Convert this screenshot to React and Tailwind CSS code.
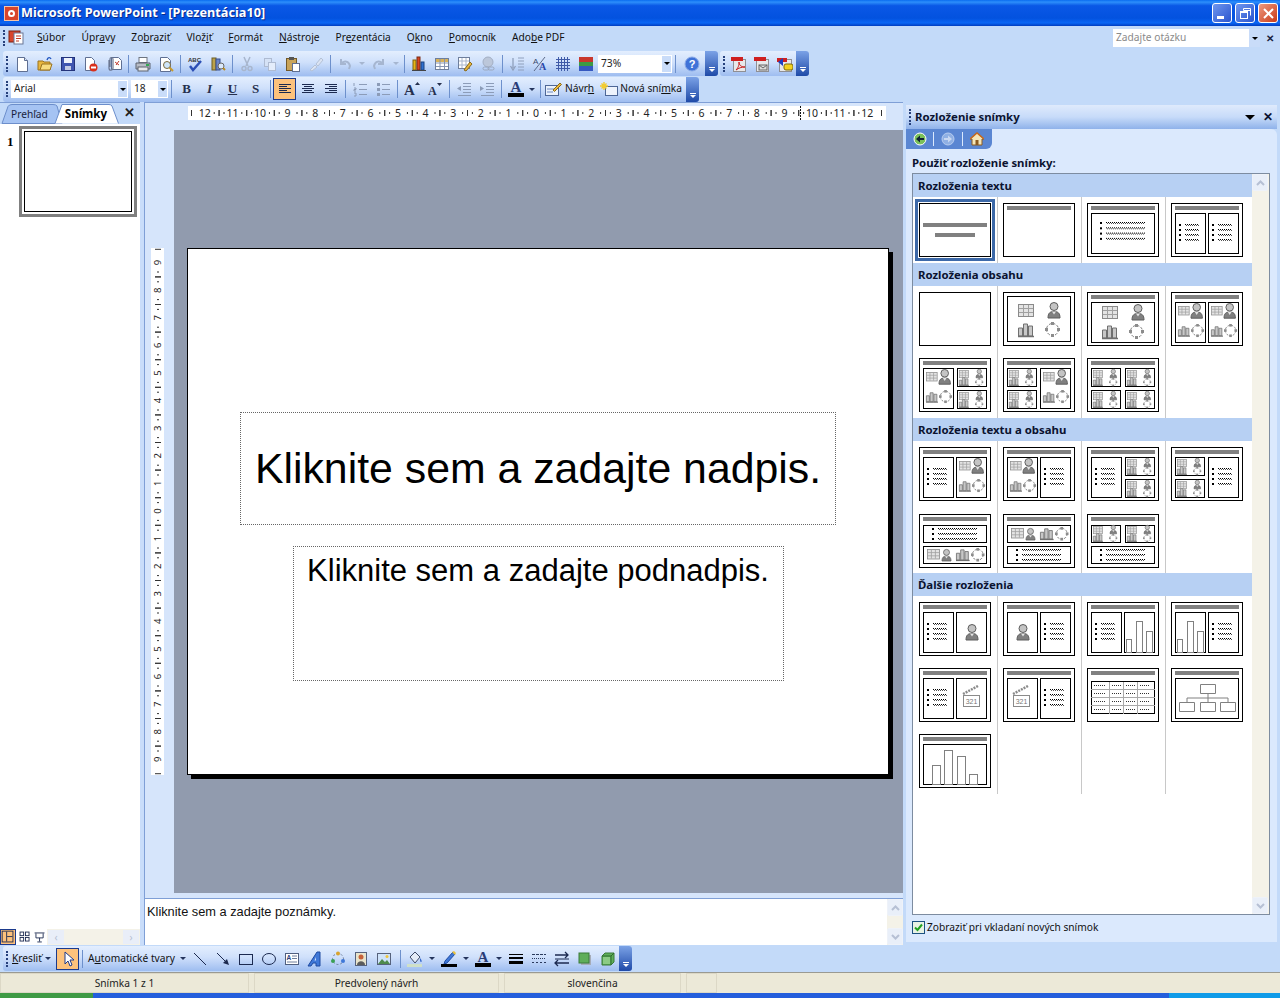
// PowerPoint 2003 window with the slide layout task pane
const uiFont = { fontFamily: '"Noto Sans", sans-serif' }

// ---------- toolbar icons ----------
const Svg = ({ children, w = 16, h = 16 }) => (
  <svg width={w} height={h} viewBox={`0 0 ${w} ${h}`} className="block">{children}</svg>
)
const Page = ({ x = 3, y = 1, w = 10, h = 14, s = '#5f6f92', f = '#fff' }) => (
  <path d={`M${x + .5} ${y + .5}h${w - 3}l3 3v${h - 3}h-${w}z`} fill={f} stroke={s} />
)
const ICONS = {
  newDoc: <Svg><Page /><path d="M10.5 1.5v3h3" fill="#dbe6f7" stroke="#5f6f92" /></Svg>,
  open: <Svg><path d="M1 5h5l1 1h6v8H1z" fill="#e8b63e" stroke="#9a7320" /><path d="M3 14l2-6h10l-2 6z" fill="#f8dc80" stroke="#9a7320" /><path d="M10 4c1-3 3-3 4-1" fill="none" stroke="#2458c0" strokeWidth="1.4" /></Svg>,
  save: <Svg><rect x="1.5" y="1.5" width="13" height="13" fill="#3f55b0" stroke="#24337a" /><rect x="4" y="2" width="8" height="5" fill="#eef2fb" /><rect x="5" y="10" width="6" height="4" fill="#c3cbe4" /></Svg>,
  perm: <Svg><Page x={2} w={9} h={13} /><circle cx="10.5" cy="11.5" r="4" fill="#d9301c" /><rect x="8" y="10.5" width="5" height="2" fill="#fff" /></Svg>,
  mail: <Svg><Page x={5} w={10} h={12} /><path d="M9 6l4 3M13 5l-3 4" stroke="#c0392b" /><path d="M3 4v8c0 3 4 3 4 0V3c0-2-3-2-3 0v8" fill="none" stroke="#6b7690" strokeWidth="1.2" /></Svg>,
  print: <Svg><rect x="4" y="1.5" width="8" height="5" fill="#fff" stroke="#6e7580" /><path d="M1 7h14v6H1z" fill="#b9bdc6" stroke="#5d636e" /><rect x="3" y="11" width="10" height="4" fill="#e8e9ec" stroke="#5d636e" /><rect x="11" y="8" width="3" height="2" fill="#35a852" /></Svg>,
  preview: <Svg><Page x={2} w={10} h={14} /><circle cx="9" cy="9" r="3.5" fill="#cfe6fa" stroke="#7c6a3c" /><path d="M11.5 11.5l3.5 3.5" stroke="#c79a2c" strokeWidth="2" /></Svg>,
  spell: <Svg><text x="1" y="6" fontSize="6" fontWeight="700" fill="#333" fontFamily="Liberation Sans">ABC</text><path d="M3 10l3 4 8-9" fill="none" stroke="#2c4fb5" strokeWidth="2.4" /></Svg>,
  research: <Svg><rect x="2" y="2" width="4" height="12" fill="#bca24a" stroke="#6d5d22" /><rect x="6" y="3" width="4" height="11" fill="#6e86c6" stroke="#39508f" /><circle cx="11" cy="10" r="3" fill="#dbe9fb" stroke="#666" /><path d="M13 12l2 2" stroke="#b98b20" strokeWidth="2" /></Svg>,
  cut: <Svg><path d="M5 1l4 9M11 1l-4 9" stroke="#a8b6cd" strokeWidth="1.5" /><circle cx="5" cy="12.5" r="2" fill="none" stroke="#a8b6cd" strokeWidth="1.4" /><circle cx="11" cy="12.5" r="2" fill="none" stroke="#a8b6cd" strokeWidth="1.4" /></Svg>,
  copy: <Svg><rect x="2.5" y="2.5" width="7" height="8" fill="#d5e2f6" stroke="#aebbd2" /><rect x="6.5" y="6.5" width="7" height="8" fill="#e4edfb" stroke="#aebbd2" /></Svg>,
  paste: <Svg><rect x="1.5" y="2.5" width="10" height="12" fill="#c9a45a" stroke="#72592a" /><rect x="4" y="1" width="5" height="3" fill="#555" /><rect x="7.5" y="7.5" width="7" height="8" fill="#fff" stroke="#5f6f92" /></Svg>,
  painter: <Svg><path d="M2 14l5-5 2 2-5 4zM8 8l5-6 2 2-5 6z" fill="#dbe4f3" stroke="#b4c1d6" /></Svg>,
  undo: <Svg><path d="M4 3v5h5M4 8c3-4 8-3 9 2l-1 3" fill="none" stroke="#a6b6d0" strokeWidth="2" /></Svg>,
  redo: <Svg><path d="M12 3v5H7M12 8c-3-4-8-3-9 2l1 3" fill="none" stroke="#a6b6d0" strokeWidth="2" /></Svg>,
  chart: <Svg><rect x="2" y="4" width="3" height="10" fill="#e7b416" stroke="#7d6410" /><rect x="6" y="1" width="3" height="13" fill="#d9441f" stroke="#7a2a10" /><rect x="10" y="6" width="3" height="8" fill="#2e6fd0" stroke="#1c437e" /><path d="M1 14.5h14" stroke="#444" /></Svg>,
  table: <Svg><rect x="1.5" y="2.5" width="13" height="11" fill="#fff" stroke="#6f7f9c" /><rect x="2" y="3" width="12" height="3" fill="#d8b25a" /><path d="M6 3v10M10.500 3v10M2 7h12M2 10.500h12" stroke="#8795b0" /></Svg>,
  tables: <Svg><rect x="1.500" y="1.500" width="11" height="11" fill="#fff" stroke="#6f7f9c" /><path d="M5 2v10M9 2v10M2 5h10M2 9h10" stroke="#a9b6cc" /><path d="M7 14l6-8 2 2-6 7z" fill="#e8b63e" stroke="#8a6a1a" /></Svg>,
  link: <Svg><circle cx="8" cy="6" r="5" fill="#bcc7da" stroke="#a3afc4" /><rect x="3" y="11" width="6" height="3" rx="1.500" fill="none" stroke="#9aa7bd" /><rect x="8" y="11" width="6" height="3" rx="1.500" fill="none" stroke="#9aa7bd" /></Svg>,
  expand: <Svg><path d="M9 2h6M9 5h6M9 8h6M9 11h6M9 14h6" stroke="#90a0bc" /><path d="M4 2v10M1.500 10l2.500 4 2.500-4" fill="none" stroke="#90a0bc" strokeWidth="1.300" /></Svg>,
  showFmt: <Svg><text x="1" y="8" fontSize="8" fill="#3a4a6c" fontFamily="Liberation Sans">A</text><path d="M13 1L2 15" stroke="#5c6a88" /><text x="7" y="14" fontSize="10" fontWeight="700" fill="#2a47a8" fontFamily="Liberation Serif">A</text></Svg>,
  grid: <Svg><path d="M1 3.500h14M1 6.500h14M1 9.500h14M1 12.500h14M3.500 1v14M6.500 1v14M9.500 1v14M12.500 1v14" stroke="#3f5aa8" /></Svg>,
  color: <Svg><rect x="1" y="1" width="14" height="5" fill="#c8372c" /><rect x="1" y="6" width="14" height="4" fill="#3d9a45" /><rect x="1" y="10" width="14" height="5" fill="#3558c0" /></Svg>,
  help: <Svg><circle cx="8" cy="8" r="7" fill="#3f72d8" stroke="#8aa9e6" /><text x="8" y="12" textAnchor="middle" fontSize="11" fontWeight="700" fill="#fff" fontFamily="Liberation Sans">?</text></Svg>,
  pdf: <Svg><rect x="2.500" y="3.500" width="12" height="12" fill="#e8e8ea" stroke="#8f8f94" /><rect x="0" y="1" width="12" height="4" fill="#cf1f1f" /><path d="M5 14c3-3 3-6 3-8 0 3 2 5 6 5-4 0-6 1-9 3z" fill="none" stroke="#c71c1c" /></Svg>,
  pdfMail: <Svg><rect x="2.500" y="3.500" width="12" height="12" fill="#e8e8ea" stroke="#8f8f94" /><rect x="0" y="1" width="12" height="4" fill="#cf1f1f" /><rect x="5" y="9" width="8" height="5" fill="#ddd" stroke="#666" /><path d="M5 9l4 3 4-3" fill="none" stroke="#666" /></Svg>,
  pdfRev: <Svg><rect x="2.500" y="3.500" width="12" height="12" fill="#e8e8ea" stroke="#8f8f94" /><rect x="0" y="2" width="10" height="4" fill="#cf1f1f" /><path d="M1 6l5-4v8z" fill="#1c3fc0" /><rect x="7" y="8" width="9" height="6" rx="2" fill="#f4d21e" stroke="#7d6a0a" /></Svg>,
  alignL: <Svg><path d="M2 3.500h12M2 5.500h8M2 7.500h12M2 9.500h8M2 11.500h12" stroke="#1c2a50" /></Svg>,
  alignC: <Svg><path d="M2 3.500h12M4 5.500h8M2 7.500h12M4 9.500h8M2 11.500h12" stroke="#1c2a50" /></Svg>,
  alignR: <Svg><path d="M2 3.500h12M6 5.500h8M2 7.500h12M6 9.500h8M2 11.500h12" stroke="#1c2a50" /></Svg>,
  numList: <Svg><path d="M7 3.500h8M7 8.500h8M7 13.500h8M2 2v3M2 7h2v1.500H2V10h2M2 12h2v3H2" stroke="#8c9cb8" fill="none" /></Svg>,
  bulList: <Svg><path d="M7 3.500h8M7 8.500h8M7 13.500h8" stroke="#8c9cb8" /><rect x="2" y="2" width="3" height="3" fill="#8c9cb8" /><rect x="2" y="7" width="3" height="3" fill="#8c9cb8" /><rect x="2" y="12" width="3" height="3" fill="#8c9cb8" /></Svg>,
  fontUp: <Svg><text x="0" y="14" fontSize="15" fontWeight="700" fill="#26304e" fontFamily="Liberation Serif">A</text><path d="M11 4l2.500-3L16 4z" fill="#26304e" /></Svg>,
  fontDown: <Svg><text x="1" y="14" fontSize="12" fontWeight="700" fill="#26304e" fontFamily="Liberation Serif">A</text><path d="M10 2l2.500 3L15 2z" fill="#26304e" /></Svg>,
  outdent: <Svg><path d="M7 2.500h8M7 5.500h8M7 8.500h8M7 11.500h8M2 14.500h13" stroke="#8c9cb8" /><path d="M5 5v5L1 7.500z" fill="#8c9cb8" /></Svg>,
  indent: <Svg><path d="M7 2.500h8M7 5.500h8M7 8.500h8M7 11.500h8M2 14.500h13" stroke="#8c9cb8" /><path d="M1 5v5l4-2.500z" fill="#8c9cb8" /></Svg>,
  fontColor: <Svg h={18}><text x="8" y="12" textAnchor="middle" fontSize="15" fontWeight="700" fill="#2a3d78" fontFamily="Liberation Serif">A</text><rect x="0" y="13" width="16" height="4" fill="#000" /></Svg>,
  design: <Svg w={18}><rect x="1.500" y="4.500" width="13" height="10" fill="#eaf1fc" stroke="#4e6797" /><path d="M3 8h8M3 11h6" stroke="#6f8ac0" /><path d="M9 9l7-7 1.500 1.500-7 7z" fill="#e8b63e" stroke="#8a6a1a" /></Svg>,
  newSlide: <Svg w={18}><rect x="5.500" y="5.500" width="12" height="9" fill="#eef3fc" stroke="#4e6797" /><path d="M4 1v8M0 5h8M1.500 2.500l5 5M6.500 2.500l-5 5" stroke="#f3cc2e" strokeWidth="1.400" /></Svg>,
  appIcon: <Svg><rect x="1" y="1" width="11" height="11" fill="#d8452b" stroke="#7d2312" /><rect x="6" y="3" width="9" height="11" fill="#fff" stroke="#6a7796" /><path d="M8 6h5M8 8.500h5M8 11h3" stroke="#c23a22" /></Svg>,
  textbox: <Svg><rect x="1.500" y="2.500" width="13" height="11" fill="#fff" stroke="#4f5f80" /><text x="2.500" y="9" fontSize="6.500" fontWeight="700" fill="#2a3d78" fontFamily="Liberation Sans">A</text><path d="M8 5h5M8 7.500h5M3 11h10" stroke="#6f7f9c" /></Svg>,
  wordart: <Svg><path d="M1 15L10 1h3v14H9v-3H6l-2 3z" fill="#3f78d8" stroke="#1e4aa0" /><path d="M7.500 9.500H9V6z" fill="#cfe0fa" /></Svg>,
  diagram: <Svg><circle cx="8" cy="8" r="5.500" fill="none" stroke="#6f7f9c" strokeDasharray="2 2" /><circle cx="8" cy="2.500" r="2" fill="#d9a32e" /><circle cx="13" cy="10" r="2" fill="#3f78d8" /><circle cx="3" cy="10" r="2" fill="#3aa055" /></Svg>,
  clip: <Svg><rect x="2.500" y="1.500" width="11" height="13" fill="#e8e4cc" stroke="#56627c" /><circle cx="8" cy="6" r="2.500" fill="#c7623a" /><path d="M4 14c0-5 8-5 8 0z" fill="#5c5c5c" /></Svg>,
  picture: <Svg><rect x="1.500" y="2.500" width="13" height="11" fill="#cfe3fa" stroke="#56627c" /><path d="M2 13l4-5 3 3 2-2 3 4z" fill="#4e8a4c" /><circle cx="11" cy="5.500" r="1.500" fill="#f0c53a" /></Svg>,
  fill: <Svg h={18}><path d="M3 7l5-5 5 5-5 6z" fill="#e4ecf8" stroke="#3d4a68" /><path d="M13 8c2 2 2 4 1 4s-1-2-1-4z" fill="#2e62c8" /><rect x="0" y="14" width="15" height="3" fill="#cfe0c8" /></Svg>,
  pen: <Svg h={18}><path d="M4 11l8-9 2 2-8 9-3 1z" fill="#3f78d8" stroke="#1e4aa0" /><path d="M11 2l2-1 2 2-1 2z" fill="#e8c23e" /><rect x="0" y="14" width="16" height="3" fill="#000" /></Svg>,
  lineW: <Svg><rect x="1" y="3" width="14" height="1" fill="#000" /><rect x="1" y="6" width="14" height="2" fill="#000" /><rect x="1" y="10" width="14" height="3" fill="#000" /></Svg>,
  dash: <Svg><path d="M1 3.500h14" stroke="#2b3a5c" strokeDasharray="3 1" /><path d="M1 7.500h14" stroke="#2b3a5c" strokeDasharray="1 1" /><path d="M1 11.500h14" stroke="#2b3a5c" strokeDasharray="2 2" /></Svg>,
  arrows: <Svg><path d="M1 4h13M11 1l3 3-3 3M1 12h14M4 9l-3 3 3 3" fill="none" stroke="#1c2a50" strokeWidth="1.300" /><path d="M1 8h14" stroke="#1c2a50" /></Svg>,
  shadow: <Svg><rect x="4" y="4" width="10" height="10" fill="#a6acb8" /><rect x="2" y="2" width="10" height="10" fill="#5fae5a" stroke="#3a7a38" /></Svg>,
  cube: <Svg><path d="M2 5l3-3h9v9l-3 3H2z" fill="#5fae5a" stroke="#3a7a38" /><path d="M2 5h9v9M11 5l3-3" fill="none" stroke="#2f6a2e" /><rect x="3" y="6" width="7" height="7" fill="#8ccb84" /></Svg>,
  arrowCursor: <Svg><path d="M5 1v12l3-3 2 5 2-1-2-5h4z" fill="#fff" stroke="#1e3a8a" /></Svg>,
  lineTool: <Svg><path d="M2 2l12 12" stroke="#1c2a50" /></Svg>,
  arrowTool: <Svg><path d="M2 2l10 10" stroke="#1c2a50" /><path d="M14 14l-6-2 4-4z" fill="#1c2a50" /></Svg>,
  rectTool: <Svg><rect x="1.500" y="3.500" width="13" height="10" fill="none" stroke="#1c2a50" /></Svg>,
  ovalTool: <Svg><ellipse cx="8" cy="8" rx="6.500" ry="5.500" fill="none" stroke="#1c2a50" /></Svg>,
  viewNormal: <Svg><rect x="1.500" y="1.500" width="12" height="12" fill="none" stroke="#1c2a50" /><path d="M6.500 2v11M7 7.500h6" stroke="#1c2a50" /></Svg>,
  viewSorter: <Svg><rect x="2.500" y="2.500" width="4" height="4" fill="none" stroke="#1c2a50" /><rect x="8.500" y="2.500" width="4" height="4" fill="none" stroke="#1c2a50" /><rect x="2.500" y="8.500" width="4" height="4" fill="none" stroke="#1c2a50" /><rect x="8.500" y="8.500" width="4" height="4" fill="none" stroke="#1c2a50" /></Svg>,
  viewShow: <Svg><path d="M2 3.500h11M3.500 4v5h8V4M7.500 9v4M5 13.500h5" fill="none" stroke="#1c2a50" /></Svg>,
}

// ---------- toolbar bits ----------
const barBg = 'bg-[linear-gradient(180deg,#e3eefe_0%,#cfe0fb_45%,#9ebdf0_100%)]'

const Btn = ({ icon, active }) => (
  <div className={`w-[23px] h-[22px] shrink-0 flex items-center justify-center ${active ? 'bg-[#fdc27c] border border-[#1b3a8c]' : ''}`}>
    {ICONS[icon]}
  </div>
)
const Sep = () => (
  <div className="w-[6px] h-[18px] shrink-0 flex justify-center"><div className="w-px h-full bg-[#6d90cc]" /></div>
)
const Caret = ({ w = 'w-[10px]', color = 'border-t-[#24345c]' }) => (
  <div className={`${w} shrink-0 flex justify-center`}>
    <div className={`w-0 h-0 border-x-[3px] border-x-transparent border-t-[3px] ${color}`} />
  </div>
)
const Grip = () => (
  <div className="w-[3px] h-[16px] ml-[3px] mr-[1px] shrink-0 border-l-2 border-dotted border-[#27417c]" />
)
const Chevron = () => (
  <div className="w-[13px] self-stretch shrink-0 rounded-r-[3px] bg-[linear-gradient(180deg,#7ba2e6_0%,#1f4aa8_100%)] flex flex-col items-center justify-end pb-[4px] gap-[1px]">
    <div className="w-[6px] h-px bg-white" />
    <div className="w-0 h-0 border-x-[3px] border-x-transparent border-t-[3px] border-t-white" />
  </div>
)
const Combo = ({ value, w, textClass = 'text-[#222]' }) => (
  <div className={`${w} h-[18px] shrink-0 bg-white flex items-center pl-[3px] text-[10.2px] ${textClass}`}>
    <span className="flex-1 truncate">{value}</span>
    <div className="w-[11px] h-full bg-[#c9dcf9] flex items-center justify-center border border-white">
      <div className="w-0 h-0 border-x-[3px] border-x-transparent border-t-[3px] border-t-black" />
    </div>
  </div>
)
const Under = ({ a, u, b }) => <>{a}<span className="underline">{u}</span>{b}</>

const MENU = [
  ['', 'S', 'úbor'], ['Úpr', 'a', 'vy'], ['Zo', 'b', 'raziť'], ['Vlož', 'i', 'ť'], ['', 'F', 'ormát'],
  ['', 'N', 'ástroje'], ['Pr', 'e', 'zentácia'], ['O', 'k', 'no'], ['', 'P', 'omocník'], ['Ado', 'b', 'e PDF'],
]

const TitleBar = () => (
  <div className="h-[26px] shrink-0 flex items-center pl-[4px] pr-[2px] bg-[linear-gradient(180deg,#0a6cf0_0%,#2d8ffb_8%,#0a58e6_22%,#0352df_70%,#0a66f4_88%,#003cc0_100%)]">
    <div className="w-[15px] h-[15px] bg-[#d8452b] border border-[#f4c4a8] flex items-center justify-center">
      <div className="w-[7px] h-[7px] rounded-full border-2 border-white" />
    </div>
    <span className="ml-[2px] text-white font-bold text-[12.7px] [text-shadow:1px_1px_0_#0a2a8a]">Microsoft PowerPoint - [Prezentácia10]</span>
    <div className="ml-auto flex gap-[3px]">
      <div className="w-[20px] h-[20px] rounded-[3px] border border-white bg-[linear-gradient(135deg,#6f96ee,#2a55cf)] flex items-end pl-[4px] pb-[3px]">
        <div className="w-[7px] h-[3px] bg-white" />
      </div>
      <div className="w-[20px] h-[20px] rounded-[3px] border border-white bg-[linear-gradient(135deg,#6f96ee,#2a55cf)] flex items-center justify-center">
        <svg width="13" height="13" viewBox="0 0 13 13"><path d="M4.500 1.500h7v7M4.500 1.500v2h7" fill="none" stroke="#fff" /><rect x="1.500" y="4.500" width="7" height="7" fill="none" stroke="#fff" /><path d="M1.500 5h7" stroke="#fff" strokeWidth="2" /></svg>
      </div>
      <div className="w-[20px] h-[20px] rounded-[3px] border border-white bg-[linear-gradient(135deg,#ee9a80,#c83a18)] flex items-center justify-center">
        <svg width="13" height="13" viewBox="0 0 13 13"><path d="M2 2l9 9M11 2l-9 9" stroke="#fff" strokeWidth="2" /></svg>
      </div>
    </div>
  </div>
)

const MenuBar = () => (
  <div className="h-[24px] shrink-0 flex items-center text-[10.2px] text-[#111]">
    <Grip />
    <div className="ml-[1px] mr-[1px]">{ICONS.appIcon}</div>
    <div className="flex ml-[4px]">
      {MENU.map(([a, u, b]) => (
        <div key={a + u + b} className="px-[8px]"><Under a={a} u={u} b={b} /></div>
      ))}
    </div>
    <div className="ml-auto flex items-center w-[147px] h-[18px] bg-white text-[#8a8a8a] pl-[3px]">
      <span className="flex-1">Zadajte otázku</span>
      <div className="w-[11px] h-full bg-[#c9dcf9] flex items-center justify-center">
        <div className="w-0 h-0 border-x-[3px] border-x-transparent border-t-[3px] border-t-black" />
      </div>
    </div>
    <div className="w-[20px] text-center text-[10px] font-bold leading-none text-[#1a2340]">✕</div>
  </div>
)

const ToolRow1 = () => (
  <div className="h-[26px] shrink-0 flex items-end pl-[3px] gap-[2px]">
    <div className={`h-[25px] w-[715px] flex items-center rounded-l-[3px] rounded-r-[3px] ${barBg}`}>
      <Grip />
      <Btn icon="newDoc" /><Btn icon="open" /><Btn icon="save" /><Btn icon="perm" /><Btn icon="mail" /><Sep />
      <Btn icon="print" /><Btn icon="preview" /><Sep />
      <Btn icon="spell" /><Btn icon="research" /><Sep />
      <Btn icon="cut" /><Btn icon="copy" /><Btn icon="paste" /><Btn icon="painter" /><Sep />
      <Btn icon="undo" /><Caret w="w-[11px]" color="border-t-[#a6b6d0]" /><Btn icon="redo" /><Caret w="w-[11px]" color="border-t-[#a6b6d0]" /><Sep />
      <Btn icon="chart" /><Btn icon="table" /><Btn icon="tables" /><Btn icon="link" /><Sep />
      <Btn icon="expand" /><Btn icon="showFmt" /><Btn icon="grid" /><Btn icon="color" />
      <div className="w-px shrink-0" />
      <Combo value="73%" w="w-[74px]" /><Sep />
      <div className="w-[2px] shrink-0" />
      <Btn icon="help" />
      <div className="flex-1" />
      <Chevron />
    </div>
    <div className={`h-[25px] w-[89px] flex items-center rounded-[3px] ${barBg}`}>
      <Grip />
      <Btn icon="pdf" /><Btn icon="pdfMail" /><Btn icon="pdfRev" />
      <div className="flex-1" />
      <Chevron />
    </div>
  </div>
)

const ToolRow2 = () => (
  <div className="h-[26px] shrink-0 flex items-center pl-[3px]">
    <div className={`h-[25px] w-[696px] flex items-center rounded-[3px] text-[10.2px] text-[#111] ${barBg}`}>
      <Grip />
      <div className="w-[1px] shrink-0" />
      <Combo value="Arial" w="w-[117px]" />
      <div className="w-[3px] shrink-0" />
      <Combo value="18" w="w-[37px]" />
      <Sep />
      <div className="w-[1px] shrink-0" />
      {['B', 'I', 'U', 'S'].map((c) => (
        <div key={c} className={`w-[23px] shrink-0 text-center text-[13px] font-bold text-[#26304e] ${c === 'I' ? 'italic' : ''} ${c === 'U' ? 'underline' : ''}`} style={{ fontFamily: '"Liberation Serif", serif' }}>{c}</div>
      ))}
      <Sep />
      <Btn icon="alignL" active /><Btn icon="alignC" /><Btn icon="alignR" /><Sep />
      <Btn icon="numList" /><Btn icon="bulList" /><Sep />
      <Btn icon="fontUp" /><Btn icon="fontDown" /><Sep />
      <Btn icon="outdent" /><Btn icon="indent" /><Sep />
      <Btn icon="fontColor" /><Caret w="w-[10px]" /><Sep />
      <div className="ml-[1px] mr-[3px]">{ICONS.design}</div>
      <span className="whitespace-nowrap"><Under a="Návr" u="h" b="" /></span>
      <div className="ml-[6px] mr-[2px]">{ICONS.newSlide}</div>
      <span className="whitespace-nowrap"><Under a="Nová sní" u="m" b="ka" /></span>
      <div className="flex-1" />
      <Chevron />
    </div>
  </div>
)

// ---------- left pane ----------
const LeftPane = () => (
  <div className="w-[140px] shrink-0 flex flex-col bg-white border-t border-[#7f9fd6]">
    <div className="h-[21px] shrink-0 bg-[#c3daf9] flex items-end relative text-[10.2px]">
      <svg width="140" height="21" viewBox="0 0 140 21" className="absolute left-0 top-0">
        <path d="M2 20.500L8 3.500Q9 1.500 12 1.500H53Q56 1.500 57 3L62 20.500z" fill="#a5c3f3" stroke="#6c8ecb" />
        <path d="M55 20.500L62 1.500H109Q111 1.500 112 3L118.500 20.500" fill="#fff" stroke="#6c8ecb" />
      </svg>
      <span className="relative ml-[11px] mb-[2px] text-[#1a2340]">Prehľad</span>
      <span className="relative ml-[17px] mb-[2px] font-bold text-[11.5px] text-black">Snímky</span>
      <span className="absolute left-[124px] top-[1px] text-[13px] font-bold leading-[16px] text-[#222]">✕</span>
    </div>
    <div className="flex-1 flex items-start pl-[7px] pt-[2px]">
      <div className="w-[12px] pt-[9px] text-[13px] font-bold leading-[14px]" style={{ fontFamily: '"Liberation Serif", serif' }}>1</div>
      <div className="w-[118px] h-[91px] border-[3px] border-[#808080] p-[2px] bg-white">
        <div className="w-full h-full border border-black" />
      </div>
    </div>
    <div className="h-[16px] shrink-0 flex items-center">
      <div className="w-[16px] h-[16px] bg-[#fdc27c] border border-[#1b3a8c] flex items-center justify-center">
        <div className="scale-90">{ICONS.viewNormal}</div>
      </div>
      <div className="w-[15px] flex justify-center ml-[1px]"><div className="scale-90">{ICONS.viewSorter}</div></div>
      <div className="w-[15px] flex justify-center"><div className="scale-90">{ICONS.viewShow}</div></div>
      <div className="flex-1 h-[16px] bg-[#f4f2e8] flex justify-between items-center px-[1px]">
        <div className="w-[16px] h-[14px] bg-[#e9eef8] text-[#b5bfd2] text-[10px] leading-[14px] text-center">‹</div>
        <div className="w-[16px] h-[14px] bg-[#e9eef8] text-[#b5bfd2] text-[10px] leading-[14px] text-center">›</div>
      </div>
    </div>
  </div>
)

// ---------- rulers ----------
const UNIT = 27.6
const RULER_STEPS = Array.from({ length: 25 }, (_, i) => i - 12)

const HRuler = () => (
  <svg width="698" height="14" viewBox="0 0 698 14" className="block bg-white">
    {RULER_STEPS.map((n) => {
      const x = 348 + n * UNIT
      return (
        <g key={n}>
          <text x={x} y="11" textAnchor="middle" fontSize="10.5" fill="#222" fontFamily="Noto Sans">{Math.abs(n)}</text>
          <rect x={x + UNIT * .5} y="4" width="1" height="6" fill="#333" />
          <rect x={x - UNIT * .5} y="4" width="1" height="6" fill="#333" />
          {n < 12 && <rect x={x + UNIT * .25 + 2} y="6" width="1" height="2" fill="#333" />}
          {n < 12 && <rect x={x + UNIT * .75 - 2} y="6" width="1" height="2" fill="#333" />}
        </g>
      )
    })}
    <path d="M612.500 0v14" stroke="#111" strokeDasharray="2 1" />
  </svg>
)

const VRuler = () => (
  <svg width="13" height="527" viewBox="0 0 13 527" className="block bg-white">
    {Array.from({ length: 19 }, (_, i) => i - 9).map((n) => {
      const y = 263 + n * UNIT
      return (
        <g key={n}>
          <text transform={`translate(10.200 ${y}) rotate(-90)`} textAnchor="middle" fontSize="9.500" fill="#222" fontFamily="Noto Sans">{Math.abs(n)}</text>
          <rect x="4" y={y + UNIT * .5} width="6" height="1" fill="#333" />
          <rect x="4" y={y - UNIT * .5} width="6" height="1" fill="#333" />
          {n < 9 && <rect x="6" y={y + UNIT * .25 + 2} width="2" height="1" fill="#333" />}
          {n < 9 && <rect x="6" y={y + UNIT * .75 - 2} width="2" height="1" fill="#333" />}
        </g>
      )
    })}
  </svg>
)

// ---------- center ----------
const ScrollArrow = ({ up }) => (
  <div className="w-[16px] h-[17px] bg-[#e9eff9] border border-[#eef2f9] rounded-[2px] flex items-center justify-center">
    <svg width="9" height="6" viewBox="0 0 9 6"><path d={up ? 'M1 5l3.500-3.500L8 5' : 'M1 1l3.500 3.500L8 1'} fill="none" stroke="#b6c0d4" strokeWidth="2" /></svg>
  </div>
)

const Center = () => (
  <div className="flex-1 min-w-0 flex flex-col bg-[#d6e5fb] border-t border-[#7f9fd6]">
    <div className="h-[27px] shrink-0 pl-[43px] pt-[3px]"><HRuler /></div>
    <div className="flex-1 min-h-0 flex">
      <div className="w-[29px] shrink-0 pl-[6px] pt-[118px]"><VRuler /></div>
      <div className="flex-1 bg-[#919bae] pl-[13px] pt-[118px]">
        <div className="w-[702px] h-[527px] bg-white border border-black shadow-[4px_4px_0_#000] flex flex-col items-center pt-[163px]" style={{ fontFamily: '"Liberation Sans", sans-serif' }}>
          <div className="w-[596px] h-[113px] border border-dotted border-[#666] flex items-center justify-center text-[42.8px] text-black whitespace-nowrap">
            Kliknite sem a zadajte nadpis.
          </div>
          <div className="mt-[21px] w-[491px] h-[135px] border border-dotted border-[#666] text-center text-[31px] leading-[44px] pt-[2px] text-black whitespace-nowrap">
            Kliknite sem a zadajte podnadpis.
          </div>
        </div>
      </div>
    </div>
    <div className="h-[6px] shrink-0 border-b border-[#7f9fd6]" />
    <div className="h-[46px] shrink-0 bg-white flex">
      <div className="flex-1 pl-[2px] pt-[4px] text-[12.8px] leading-[18px] text-[#111]" style={{ fontFamily: '"Liberation Sans", sans-serif' }}>
        Kliknite sem a zadajte poznámky.
      </div>
      <div className="w-[16px] bg-[#f4f2e8] flex flex-col justify-between">
        <ScrollArrow up /><ScrollArrow />
      </div>
    </div>
  </div>
)

// ---------- layout thumbnails ----------
const Frame = ({ x, y, w, h }) => (
  <rect x={x + .5} y={y + .5} width={w - 1} height={h - 1} fill="none" stroke="#000" shapeRendering="crispEdges" />
)
const TitleLine = () => <rect x="4" y="3" width="64" height="4" fill="#808080" />

const BulletText = ({ x, y, w, step = 5 }) => (
  <g>
    {[0, 1, 2, 3].map((i) => (
      <g key={i}>
        <rect x={x} y={y + i * step} width="2" height="2" fill="#000" />
        <path d={`M${x + 6} ${y + i * step + .5}h${w}`} stroke="#000" strokeDasharray="1 1" />
        <path d={`M${x + 7} ${y + i * step + 1.500}h${w - 1}`} stroke="#555" strokeDasharray="1 1" />
      </g>
    ))}
  </g>
)
const Bullets3 = ({ x, y, w }) => (
  <g>
    {[0, 1, 2].map((i) => (
      <g key={i}>
        <rect x={x} y={y + i * 5} width="2" height="2" fill="#000" />
        <path d={`M${x + 6} ${y + i * 5 + .5}h${w}`} stroke="#000" strokeDasharray="1 1" />
        <path d={`M${x + 7} ${y + i * 5 + 1.500}h${w - 1}`} stroke="#555" strokeDasharray="1 1" />
      </g>
    ))}
  </g>
)

const GTable = ({ x, y, s = 1 }) => (
  <g transform={`translate(${x} ${y}) scale(${s})`}>
    <rect x=".5" y=".5" width="15" height="12" fill="#e4e4e4" stroke="#8a8a8a" />
    <path d="M5.500 1v11M10.500 1v11M1 4.500h14M1 8.500h14" stroke="#a0a0a0" />
  </g>
)
const GPerson = ({ x, y, s = 1 }) => (
  <g transform={`translate(${x} ${y}) scale(${s})`}>
    <circle cx="6" cy="4.500" r="4" fill="#c4c4c4" stroke="#5c5c5c" />
    <path d="M0 16c0-5 2-6.500 6-6.500s6 1.500 6 6.500z" fill="#808080" stroke="#5c5c5c" />
    <path d="M4 9.500l2 3 2-3" fill="#e4e4e4" />
  </g>
)
const GChart = ({ x, y, s = 1 }) => (
  <g transform={`translate(${x} ${y}) scale(${s})`}>
    <path d="M.5 5h4v8h-4zM5.500 1h4v12h-4zM10.500 3h4v10h-4z" fill="#c8c8c8" stroke="#707070" />
    <path d="M0 13.500h16" stroke="#707070" strokeWidth="1.500" />
  </g>
)
const GCycle = ({ x, y, s = 1 }) => (
  <g transform={`translate(${x} ${y}) scale(${s})`}>
    <circle cx="7.500" cy="7.500" r="6" fill="none" stroke="#777" strokeDasharray="2.500 1.500" />
    <rect x="6" y="0" width="3" height="3" fill="#8c8c8c" />
    <rect x="12" y="6" width="3" height="3" fill="#8c8c8c" />
    <rect x="0" y="6" width="3" height="3" fill="#8c8c8c" />
    <rect x="6" y="12" width="3" height="3" fill="#8c8c8c" />
  </g>
)
// four content icons in a 2x2 block
const BigQuad = ({ x, y }) => (
  <g>
    <GTable x={x} y={y} />
    <GPerson x={x + 30} y={y - 2} />
    <GChart x={x} y={y + 19} />
    <GCycle x={x + 27} y={y + 18} />
  </g>
)
const MidQuad = ({ x, y }) => (
  <g>
    <GTable x={x} y={y} s={.72} />
    <GPerson x={x + 13} y={y - 3} s={.95} />
    <GChart x={x} y={y + 20} s={.75} />
    <GCycle x={x + 13} y={y + 18} s={.87} />
  </g>
)
const SmallQuad = ({ x, y }) => (
  <g>
    <GTable x={x} y={y} s={.62} />
    <GPerson x={x + 17} y={y - 1} s={.55} />
    <GChart x={x} y={y + 7} s={.62} />
    <GCycle x={x + 16} y={y + 8} s={.55} />
  </g>
)
const RowQuad = ({ x, y }) => (
  <g>
    <GTable x={x} y={y} s={.8} />
    <GPerson x={x + 15} y={y} s={.75} />
    <GChart x={x + 29} y={y} s={.85} />
    <GCycle x={x + 44} y={y - 1} s={.9} />
  </g>
)
const Box = (x, y, w, h) => <Frame x={x} y={y} w={w} h={h} />

const TwoCol = ({ left, right }) => (
  <>
    <TitleLine />
    {Box(4, 10, 31, 41)}
    {Box(37, 10, 31, 41)}
    {left}
    {right}
  </>
)
const Clapper = ({ x, y }) => (
  <g>
    <rect x={x + .5} y={y + 9.500} width="16" height="11" fill="none" stroke="#8a8a8a" />
    <path d={`M${x} ${y + 8}L${x + 15} ${y}`} stroke="#8a8a8a" strokeWidth="2.500" strokeDasharray="2 1" />
    <text x={x + 8.500} y={y + 18} textAnchor="middle" fontSize="7" fill="#777" fontFamily="Liberation Sans">321</text>
  </g>
)
const OutlineBars = ({ x, y, bars }) => (
  <g>
    {bars.map(([dx, w, h]) => (
      <rect key={dx} x={x + dx + .5} y={y - h + .5} width={w} height={h} fill="none" stroke="#808080" />
    ))}
  </g>
)

const MidText = ({ x }) => <BulletText x={x} y={21} w={14} />

const THUMBS = {
  title: <><rect x="4" y="20" width="64" height="4" fill="#808080" /><rect x="16" y="30" width="40" height="4" fill="#808080" /></>,
  titleOnly: <TitleLine />,
  text: <><TitleLine />{Box(4, 10, 64, 41)}<BulletText x={13} y={19} w={39} step={5.300} /></>,
  twoText: <TwoCol left={<MidText x={8} />} right={<MidText x={41} />} />,
  blank: null,
  quadFull: <>{Box(4, 4, 64, 46)}<BigQuad x={15} y={12} /></>,
  titleQuad: <><TitleLine />{Box(4, 10, 64, 41)}<BigQuad x={15} y={14} /></>,
  twoQuad: <TwoCol left={<MidQuad x={7} y={14} />} right={<MidQuad x={40} y={14} />} />,
  quadTwoSmall: <><TitleLine />{Box(4, 10, 31, 41)}{Box(38, 10, 30, 19)}{Box(38, 32, 30, 19)}<MidQuad x={7} y={14} /><SmallQuad x={40} y={12} /><SmallQuad x={40} y={34} /></>,
  twoSmallQuad: <><TitleLine />{Box(4, 10, 30, 19)}{Box(4, 32, 30, 19)}{Box(37, 10, 31, 41)}<SmallQuad x={6} y={12} /><SmallQuad x={6} y={34} /><MidQuad x={40} y={14} /></>,
  fourSmall: <><TitleLine />{Box(4, 10, 30, 19)}{Box(4, 32, 30, 19)}{Box(38, 10, 30, 19)}{Box(38, 32, 30, 19)}<SmallQuad x={6} y={12} /><SmallQuad x={6} y={34} /><SmallQuad x={40} y={12} /><SmallQuad x={40} y={34} /></>,
  textQuad: <TwoCol left={<MidText x={8} />} right={<MidQuad x={40} y={14} />} />,
  quadText: <TwoCol left={<MidQuad x={7} y={14} />} right={<MidText x={41} />} />,
  textTwoSmall: <><TitleLine />{Box(4, 10, 31, 41)}{Box(38, 10, 30, 19)}{Box(38, 32, 30, 19)}<MidText x={8} /><SmallQuad x={40} y={12} /><SmallQuad x={40} y={34} /></>,
  twoSmallText: <><TitleLine />{Box(4, 10, 30, 19)}{Box(4, 32, 30, 19)}{Box(37, 10, 31, 41)}<SmallQuad x={6} y={12} /><SmallQuad x={6} y={34} /><MidText x={41} /></>,
  textOverRow: <><TitleLine />{Box(4, 11, 64, 18)}{Box(4, 32, 64, 18)}<Bullets3 x={13} y={14} w={39} /><RowQuad x={8} y={35} /></>,
  rowOverText: <><TitleLine />{Box(4, 11, 64, 18)}{Box(4, 32, 64, 18)}<RowQuad x={8} y={14} /><Bullets3 x={13} y={35} w={39} /></>,
  twoOverText: <><TitleLine />{Box(4, 11, 30, 18)}{Box(38, 11, 30, 18)}{Box(4, 32, 64, 18)}<SmallQuad x={6} y={12} /><SmallQuad x={40} y={12} /><Bullets3 x={13} y={35} w={39} /></>,
  textClip: <TwoCol left={<MidText x={8} />} right={<GPerson x={47} y={22} />} />,
  clipText: <TwoCol left={<GPerson x={14} y={22} />} right={<MidText x={41} />} />,
  textChart: <TwoCol left={<MidText x={8} />} right={<OutlineBars x={38} y={50} bars={[[1, 5, 13], [11, 6, 31], [21, 6, 21]]} />} />,
  chartText: <TwoCol left={<OutlineBars x={5} y={50} bars={[[1, 5, 13], [11, 6, 31], [21, 6, 21]]} />} right={<MidText x={41} />} />,
  textMedia: <TwoCol left={<MidText x={8} />} right={<Clapper x={44} y={18} />} />,
  mediaText: <TwoCol left={<Clapper x={10} y={18} />} right={<MidText x={41} />} />,
  grid: (
    <>
      <TitleLine />
      {Box(4, 13, 64, 33)}
      <path d="M4 21.500h64M4 29.500h64M4 37.500h64M22.500 14v32M36.500 14v32M50.500 14v32" stroke="#a8a8a8" />
      {[0, 1, 2, 3].map((r) => [7, 25, 39, 53].map((c) => (
        <path key={`${r}-${c}`} d={`M${c} ${17.500 + r * 8}h${c === 7 ? 11 : 9}`} stroke="#333" strokeDasharray="1 1" />
      )))}
    </>
  ),
  org: (
    <>
      <TitleLine />
      {Box(4, 10, 64, 41)}
      <path d="M29.500 16.500h15v9h-15zM8.500 34.500h15v9h-15zM29.500 34.500h15v9h-15zM49.500 34.500h15v9h-15zM37 26v8M16 34v-4h41v4" fill="none" stroke="#808080" />
    </>
  ),
  bigChart: <><TitleLine />{Box(4, 10, 64, 41)}<OutlineBars x={13} y={50} bars={[[0, 8, 19], [12, 8, 34], [25, 8, 28], [37, 8, 10]]} /></>,
}

const Thumb = ({ kind, selected }) => (
  <div className={selected ? 'outline-[3px] outline-offset-[1px] outline-[#3d69a8] w-[72px] h-[54px]' : 'w-[72px] h-[54px]'}>
    <svg width="72" height="54" viewBox="0 0 72 54" className="block bg-white">
      <Frame x={0} y={0} w={72} h={54} />
      {THUMBS[kind]}
    </svg>
  </div>
)

const SECTIONS = [
  { title: 'Rozloženia textu', rows: [{ cls: 'h-[66px]', pad: 'pt-[6px]', items: ['title', 'titleOnly', 'text', 'twoText'] }] },
  {
    title: 'Rozloženia obsahu',
    rows: [
      { cls: 'h-[66px]', pad: 'pt-[6px]', items: ['blank', 'quadFull', 'titleQuad', 'twoQuad'] },
      { cls: 'h-[66px]', pad: 'pt-[6px]', items: ['quadTwoSmall', 'twoSmallQuad', 'fourSmall'] },
    ],
  },
  {
    title: 'Rozloženia textu a obsahu',
    rows: [
      { cls: 'h-[66px]', pad: 'pt-[6px]', items: ['textQuad', 'quadText', 'textTwoSmall', 'twoSmallText'] },
      { cls: 'h-[66px]', pad: 'pt-[7px]', items: ['textOverRow', 'rowOverText', 'twoOverText'] },
    ],
  },
  {
    title: 'Ďalšie rozloženia',
    rows: [
      { cls: 'h-[66px]', pad: 'pt-[6px]', items: ['textClip', 'clipText', 'textChart', 'chartText'] },
      { cls: 'h-[66px]', pad: 'pt-[6px]', items: ['textMedia', 'mediaText', 'grid', 'org'] },
      { cls: 'h-[66px]', pad: 'pt-[6px]', items: ['bigChart'] },
    ],
  },
]

const LayoutRow = ({ row }) => (
  <div className={`grid grid-cols-[84px_84px_84px_84px] ml-[1px] ${row.cls}`}>
    {[0, 1, 2, 3].map((i) => (
      <div key={i} className={`pl-[5px] ${row.pad} ${i < 3 ? 'border-r border-[#c8c8c8]' : ''}`}>
        {row.items[i] !== undefined && <Thumb kind={row.items[i]} selected={row.items[i] === 'title'} />}
      </div>
    ))}
  </div>
)

const TaskPane = () => (
  <div className="w-[377px] shrink-0 pl-[3px] pr-[3px] pt-[3px] pb-[3px] flex flex-col">
    <div className="h-[24px] shrink-0 flex items-center bg-[linear-gradient(180deg,#dfeafc_0%,#c7dbf9_50%,#8fb2ea_100%)] text-[11.4px] font-bold text-[#0b1330]">
      <Grip />
      <span className="ml-[2px]">Rozloženie snímky</span>
      <div className="ml-auto w-0 h-0 border-x-[5px] border-x-transparent border-t-[5px] border-t-black" />
      <span className="ml-[8px] mr-[4px] text-[12px] leading-none">✕</span>
    </div>
    <div className="flex-1 min-h-0 flex flex-col bg-[#dbe9fd] rounded-tr-[6px]">
      <div className="w-[86px] h-[20px] shrink-0 bg-[#5a86d2] rounded-br-[6px] flex items-center pl-[7px]">
        <svg width="14" height="14" viewBox="0 0 14 14"><circle cx="7" cy="7" r="6" fill="#7ac05a" stroke="#fff" /><path d="M3 7l4-3.500V6h4v2H7v2.500z" fill="#123" /></svg>
        <div className="w-px h-[14px] bg-[#dbe9fd] ml-[6px] mr-[7px]" />
        <svg width="14" height="14" viewBox="0 0 14 14"><circle cx="7" cy="7" r="6" fill="#8fb0e4" stroke="#b8cdf0" /><path d="M11 7L7 3.500V6H3v2h4v2.500z" fill="#c9d8f2" /></svg>
        <div className="w-px h-[14px] bg-[#dbe9fd] ml-[7px] mr-[7px]" />
        <svg width="14" height="14" viewBox="0 0 14 14"><path d="M0 7l7-6 7 6h-2v6H2V7z" fill="#f5e6b8" stroke="#8a5a20" /><path d="M0 7l7-6 7 6" fill="none" stroke="#c76a1f" strokeWidth="1.500" /><rect x="5.500" y="8" width="3" height="5" fill="#8a5a20" /></svg>
      </div>
      <div className="h-[24px] shrink-0 pl-[6px] pt-[6px] text-[11.4px] leading-[16px] font-bold text-[#0b1330]">Použiť rozloženie snímky:</div>
      <div className="ml-[6px] w-[358px] h-[742px] shrink-0 border border-[#7d8ca0] flex">
        <div className="w-[339px] bg-white">
          {SECTIONS.map((s) => (
            <div key={s.title}>
              <div className="h-[23px] bg-[#b7d0f3] pl-[5px] text-[11.4px] leading-[23px] font-bold text-[#0b1330]">{s.title}</div>
              {s.rows.map((r, i) => <LayoutRow key={i} row={r} />)}
            </div>
          ))}
        </div>
        <div className="flex-1 bg-[#f4f2e8] flex flex-col justify-between">
          <ScrollArrow up /><ScrollArrow />
        </div>
      </div>
      <div className="flex items-center ml-[6px] mt-[5px] text-[10.2px] text-[#111]">
        <div className="w-[13px] h-[13px] bg-[#e8f2e4] border border-[#1c5180] flex items-center justify-center mr-[2px]">
          <svg width="9" height="9" viewBox="0 0 9 9"><path d="M1 4.500l2.500 2.500L8 1.500" fill="none" stroke="#21a121" strokeWidth="2" /></svg>
        </div>
        Zobraziť pri vkladaní nových snímok
      </div>
    </div>
  </div>
)

// ---------- bottom ----------
const DrawBar = () => (
  <div className="h-[27px] shrink-0 flex items-center pl-[3px]">
    <div className={`h-[25px] w-[629px] flex items-center rounded-[3px] text-[10.2px] text-[#111] ${barBg}`}>
      <Grip />
      <span className="ml-[2px] w-[31px] whitespace-nowrap"><Under a="" u="K" b="resliť" /></span>
      <Caret w="w-[10px]" />
      <div className="w-[3px] shrink-0" />
      <Btn icon="arrowCursor" active />
      <Sep />
      <span className="ml-[3px] w-[90px] whitespace-nowrap"><Under a="A" u="u" b="tomatické tvary" /></span>
      <Caret w="w-[10px]" />
      <Btn icon="lineTool" /><Btn icon="arrowTool" /><Btn icon="rectTool" /><Btn icon="ovalTool" />
      <Btn icon="textbox" /><Btn icon="wordart" /><Btn icon="diagram" /><Btn icon="clip" /><Btn icon="picture" />
      <div className="w-[2px] shrink-0" />
      <Sep />
      <Btn icon="fill" /><Caret w="w-[11px]" />
      <Btn icon="pen" /><Caret w="w-[11px]" />
      <Btn icon="fontColor" /><Caret />
      <Btn icon="lineW" /><Btn icon="dash" /><Btn icon="arrows" /><Btn icon="shadow" /><Btn icon="cube" />
      <div className="flex-1" />
      <Chevron />
    </div>
  </div>
)

const StatusCell = ({ w, children }) => (
  <div className={`${w} h-[20px] shrink-0 border border-[#dcd8c6] text-center text-[10.2px] leading-[18px] text-[#222]`}>{children}</div>
)

const StatusBar = () => (
  <div className="h-[21px] shrink-0 bg-[#ece9d8] border-t border-[#9a9a92] flex gap-[5px]">
    <StatusCell w="w-[249px]">Snímka 1 z 1</StatusCell>
    <StatusCell w="w-[245px]">Predvolený návrh</StatusCell>
    <StatusCell w="w-[177px]">slovenčina</StatusCell>
    <StatusCell w="w-[31px]" />
  </div>
)

const Taskbar = () => (
  <div className="h-[5px] shrink-0 flex bg-[#245edc]">
    <div className="w-[93px] bg-[#3f9a45]" />
    <div className="flex-1" />
    <div className="w-[111px] bg-[#0f9be8]" />
  </div>
)

export default function App() {
  return (
    <div className="w-[1280px] h-[998px] overflow-hidden flex flex-col bg-[#c3daf9]" style={uiFont}>
      <TitleBar />
      <MenuBar />
      <ToolRow1 />
      <ToolRow2 />
      <div className="flex-1 min-h-0 flex">
        <LeftPane />
        <div className="w-[4px] shrink-0 bg-[#c9ddfa]" />
        <div className="w-px shrink-0 bg-[#7f9fd6]" />
        <Center />
        <TaskPane />
      </div>
      <DrawBar />
      <StatusBar />
      <Taskbar />
    </div>
  )
}
